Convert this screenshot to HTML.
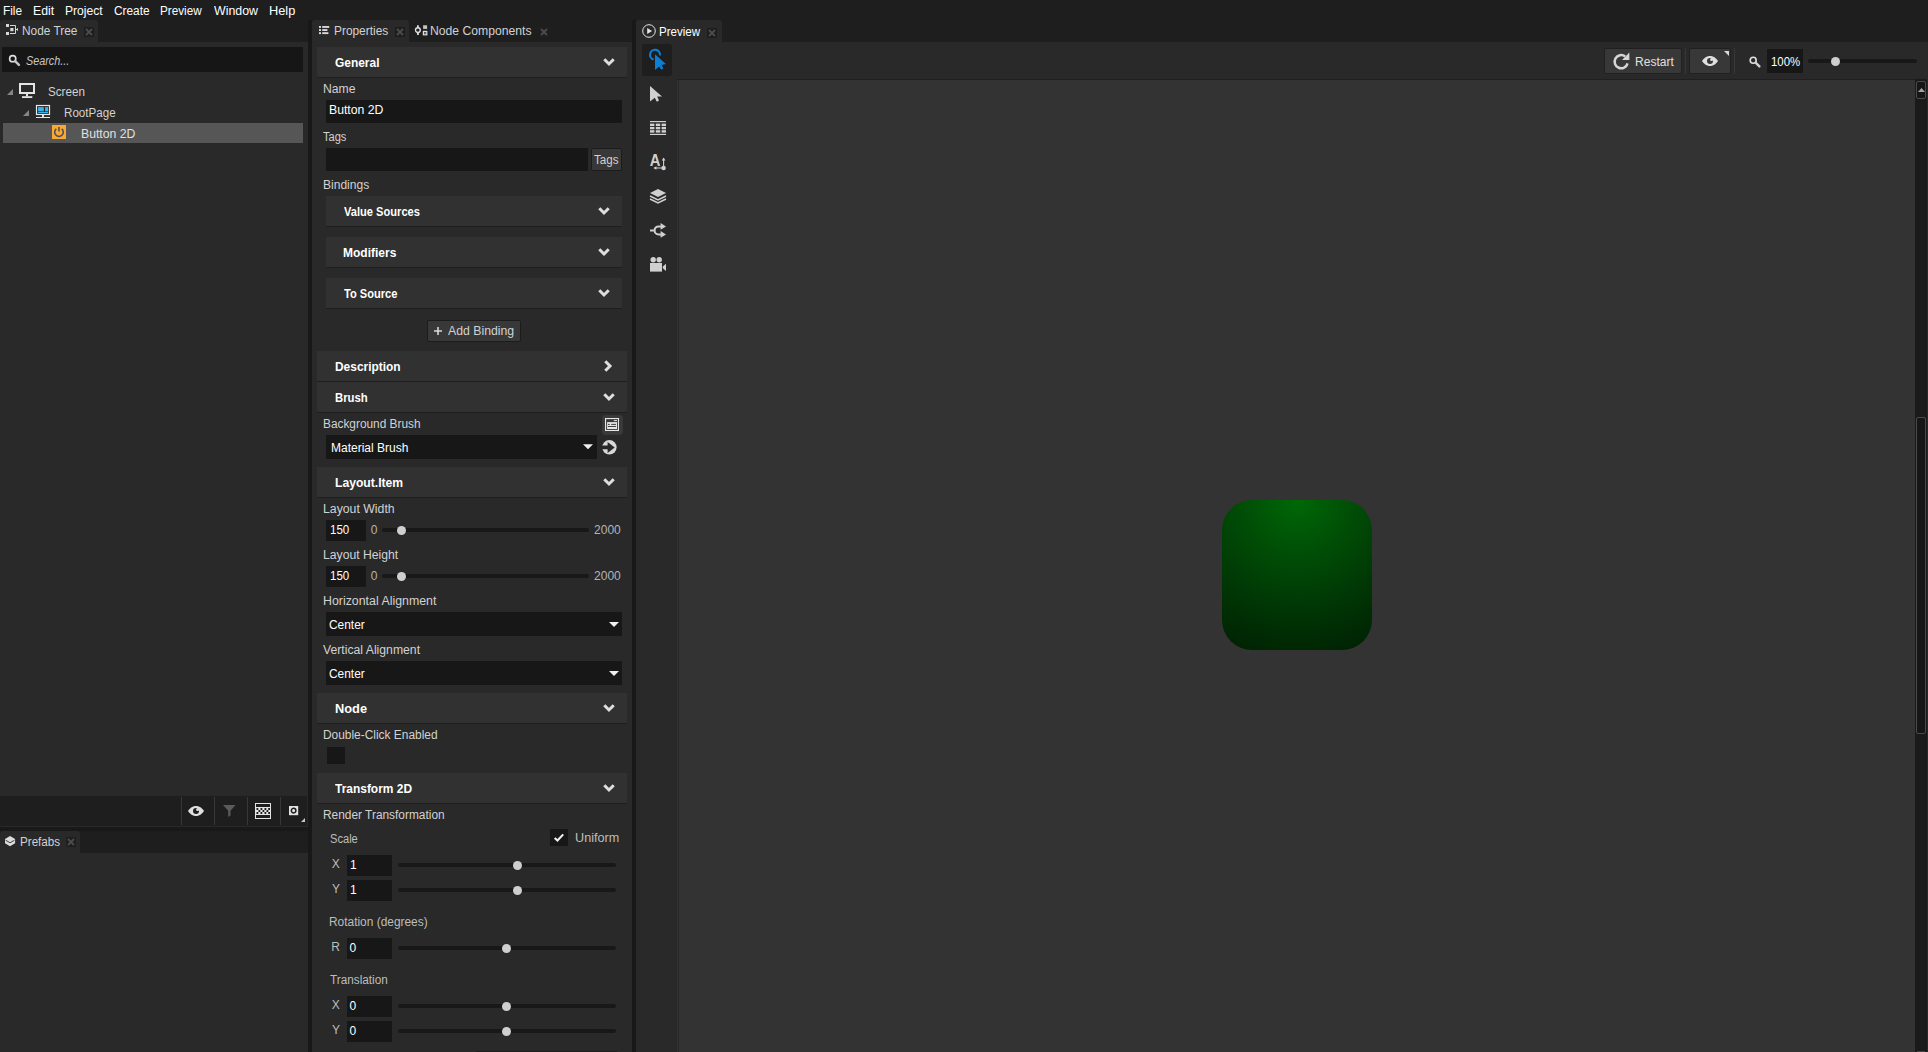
<!DOCTYPE html>
<html><head><meta charset="utf-8"><title>Kanzi Studio</title>
<style>
*{box-sizing:border-box;margin:0;padding:0}
html,body{width:1928px;height:1052px;overflow:hidden;background:#1e1e1e}
body{position:relative;font-family:"Liberation Sans",sans-serif;font-size:12px;color:#d2d2d2;-webkit-font-smoothing:antialiased}
.a{position:absolute}
.t{position:absolute;white-space:nowrap;line-height:14px;height:14px}
.w{color:#fff}
.b{font-weight:bold;color:#fff}
.panel{position:absolute;background:#292929}
.tab{position:absolute;background:#292929;border-radius:3px 3px 0 0}
.hd{position:absolute;background:#313131;border-bottom:1px solid #1e1e1e;height:31px}
.fld{position:absolute;background:#171717}
.trk{position:absolute;height:4px;border-radius:2px;background:#181818}
.th{position:absolute;width:9px;height:9px;border-radius:50%;background:#cfcfcf}
.btn{position:absolute;background:#383838;border:1px solid #1c1c1c;border-radius:2px}
svg{position:absolute;overflow:visible}
.x{position:absolute;width:10px;height:10px;background:#1e1e1e}
</style></head><body>
<!-- MENU -->
<div id="menu">
<span class="t w" style="left:2.85px;top:4px;transform:scaleX(0.9849);transform-origin:0 0">File</span>
<span class="t w" style="left:32.58px;top:4px;transform:scaleX(1.0243);transform-origin:0 0">Edit</span>
<span class="t w" style="left:64.80px;top:4px;transform:scaleX(1.0097);transform-origin:0 0">Project</span>
<span class="t w" style="left:113.55px;top:4px;transform:scaleX(0.9878);transform-origin:0 0">Create</span>
<span class="t w" style="left:160.45px;top:4px;transform:scaleX(0.9744);transform-origin:0 0">Preview</span>
<span class="t w" style="left:213.60px;top:4px;transform:scaleX(1.0301);transform-origin:0 0">Window</span>
<span class="t w" style="left:269.33px;top:4px;transform:scaleX(1.0658);transform-origin:0 0">Help</span>
</div>
<div id="left">
<div class="tab" style="left:0;top:20px;width:98px;height:23px"></div>
<div class="panel" style="left:0;top:42px;width:308px;height:785px"></div>
<svg style="left:6px;top:24px" width="12" height="12" viewBox="0 0 12 12"><g fill="#d8d8d8"><rect x="0" y="0" width="3" height="3"/><rect x="0" y="8" width="3" height="3"/><rect x="4.3" y="4" width="3.2" height="3.2"/></g><path d="M4 1.5H9.5V9.5H4M9.5 5.5H11.5M11.5 4.3V6.7" fill="none" stroke="#d8d8d8" stroke-width="1"/></svg>
<span class="t" style="left:22.39px;top:24px;transform:scaleX(0.9890);transform-origin:0 0">Node Tree</span>
<div class="x" style="left:84px;top:27px"></div>
<svg style="left:85px;top:28px" width="8" height="8" viewBox="0 0 8 8"><path d="M1 1L7 7M7 1L1 7" stroke="#4c4c4c" stroke-width="1.8" fill="none"/></svg>
<div class="fld" style="left:2px;top:47px;width:301px;height:25px;background:#161616"></div>
<svg style="left:8px;top:54px" width="12" height="12" viewBox="0 0 12 12"><circle cx="4.7" cy="4.7" r="3.1" fill="none" stroke="#e0e0e0" stroke-width="1.6"/><path d="M7.4 7.4L10.9 10.9" stroke="#c4c4c4" stroke-width="2.5" stroke-linecap="round"/></svg>
<span class="t" style="left:26.22px;top:54px;font-style:italic;color:#c8c8c8;transform:scaleX(0.9000);transform-origin:0 0">Search...</span>
<!-- tree -->
<svg style="left:7px;top:89px" width="6" height="6" viewBox="0 0 6 6"><path d="M6 0V6H0Z" fill="#858585"/></svg>
<svg style="left:19px;top:83px" width="16" height="15" viewBox="0 0 16 15"><rect x="1" y="1" width="14" height="9" fill="none" stroke="#e4e4e4" stroke-width="2"/><rect x="7" y="11" width="2" height="2.4" fill="#e4e4e4"/><rect x="3" y="13.2" width="10.3" height="1.8" fill="#e4e4e4"/></svg>
<span class="t" style="left:48.00px;top:85px;transform:scaleX(0.9721);transform-origin:0 0">Screen</span>
<svg style="left:23px;top:110px" width="6" height="6" viewBox="0 0 6 6"><path d="M6 0V6H0Z" fill="#858585"/></svg>
<svg style="left:36px;top:105px" width="14" height="13" viewBox="0 0 14 13"><rect x="0.5" y="0.5" width="13" height="9" fill="none" stroke="#e8e8e8" stroke-width="1.2"/><rect x="2.1" y="2.1" width="5.7" height="4.2" fill="#3bb4e8"/><rect x="9.1" y="2.1" width="2.9" height="4.2" fill="#3bb4e8"/><rect x="2.1" y="6.9" width="9.9" height="1.2" fill="#3bb4e8"/><rect x="6" y="9.5" width="1.9" height="2.5" fill="#e8e8e8"/><rect x="0" y="12" width="14" height="1" fill="#e8e8e8"/></svg>
<span class="t" style="left:63.83px;top:106px;transform:scaleX(0.9669);transform-origin:0 0">RootPage</span>
<div class="a" style="left:3px;top:123px;width:300px;height:20px;background:#565656"></div>
<svg style="left:52px;top:125px" width="14" height="14" viewBox="0 0 14 14"><rect width="14" height="14" fill="#f9a933"/><path d="M4.3 3.8A4.3 4.3 0 1 0 9.7 3.8" fill="none" stroke="#4d5058" stroke-width="1.6"/><path d="M7 1.9V6.6" stroke="#4d5058" stroke-width="1.6"/></svg>
<span class="t" style="left:80.79px;top:127px;color:#e0e0e0;transform:scaleX(1.0199);transform-origin:0 0">Button 2D</span>
<!-- bottom toolbar -->
<div class="a" style="left:0;top:796px;width:307px;height:30px;background:#1e1e1e"></div>
<div class="a" style="left:0;top:827px;width:308px;height:4px;background:#191919"></div>
<div class="a" style="left:181px;top:797px;width:1px;height:28px;background:#383838"></div>
<div class="a" style="left:214px;top:797px;width:1px;height:28px;background:#383838"></div>
<div class="a" style="left:247px;top:797px;width:1px;height:28px;background:#383838"></div>
<div class="a" style="left:280px;top:797px;width:1px;height:28px;background:#383838"></div>
<svg style="left:188px;top:805px" width="16" height="12" viewBox="0 0 16 12"><path d="M0 6C3 1.8 5.5 1 8 1S13 1.8 16 6C13 10.2 10.5 11 8 11S3 10.2 0 6Z" fill="#e0e0e0"/><circle cx="8" cy="5.9" r="3" fill="#1e1e1e"/><circle cx="9.6" cy="4.5" r="1.5" fill="#e0e0e0"/></svg>
<svg style="left:222.8px;top:805px" width="13" height="12" viewBox="0 0 13 12"><path d="M0 0H12.6L7.5 5.8V10.6L5.2 12V5.8Z" fill="#5a5a5a"/></svg>
<svg style="left:255px;top:803px" width="16" height="16" viewBox="0 0 16 16"><rect x="0.5" y="0.5" width="15" height="15" fill="none" stroke="#e4e4e4"/><rect x="1" y="4" width="14" height="8" fill="#e4e4e4"/><g fill="#1e1e1e"><rect x="1.5" y="5" width="1.8" height="2"/><rect x="5.5" y="5" width="1.8" height="2"/><rect x="9.5" y="5" width="1.8" height="2"/><rect x="13.2" y="5" width="1.8" height="2"/><rect x="3.5" y="7" width="1.8" height="2"/><rect x="7.5" y="7" width="1.8" height="2"/><rect x="11.5" y="7" width="1.8" height="2"/><rect x="1.5" y="9" width="1.8" height="2"/><rect x="5.5" y="9" width="1.8" height="2"/><rect x="9.5" y="9" width="1.8" height="2"/><rect x="13.2" y="9" width="1.8" height="2"/></g></svg>
<svg style="left:289px;top:806px" width="9" height="9" viewBox="0 0 9 9"><rect width="9.2" height="9.2" fill="#e2e2e2"/><circle cx="4.6" cy="4.6" r="2.3" fill="none" stroke="#1e1e1e" stroke-width="1.5"/></svg>
<svg style="left:301px;top:818px" width="4" height="4" viewBox="0 0 4 4"><path d="M4 0V4H0Z" fill="#c8c8c8"/></svg>
<!-- prefabs -->
<div class="tab" style="left:0;top:831px;width:80px;height:23px"></div>
<div class="panel" style="left:0;top:853px;width:308px;height:199px"></div>
<svg style="left:4.7px;top:835.8px" width="10.1" height="10.4" viewBox="0 0 10.4 10.6"><path d="M5.2 0L10.4 3V7.4L5.2 10.6L0 7.4V3Z" fill="#dcdcdc"/><path d="M0.6 4.3L5.2 6.9L9.8 4.3" fill="none" stroke="#292929" stroke-width="0.9"/></svg>
<span class="t" style="left:19.82px;top:835px;transform:scaleX(0.9704);transform-origin:0 0">Prefabs</span>
<div class="x" style="left:66px;top:837px"></div>
<svg style="left:67px;top:838px" width="8" height="8" viewBox="0 0 8 8"><path d="M1 1L7 7M7 1L1 7" stroke="#4c4c4c" stroke-width="1.8" fill="none"/></svg>
</div>
<!-- NODETREE_END -->
<div id="props">
<div class="a" style="left:308px;top:20px;width:4px;height:1032px;background:#181818"></div>
<div class="tab" style="left:312px;top:20px;width:97px;height:23px"></div>
<div class="panel" style="left:312px;top:42px;width:320px;height:1010px"></div>
<div class="a" style="left:632px;top:20px;width:4px;height:1032px;background:#181818"></div>
<svg style="left:319px;top:26px" width="10" height="9" viewBox="0 0 10 9"><g fill="#d8d8d8"><rect x="0" y="0" width="2" height="1.9"/><rect x="3.2" y="0" width="7" height="1.9"/><rect x="0" y="3.1" width="2" height="1.9"/><rect x="3.2" y="3.1" width="5.2" height="1.9"/><rect x="0" y="6.2" width="2" height="1.9"/><rect x="3.2" y="6.2" width="6.2" height="1.9"/></g></svg>
<span class="t" style="left:334.40px;top:24px;transform:scaleX(0.9908);transform-origin:0 0">Properties</span>
<div class="x" style="left:395px;top:27px"></div>
<svg style="left:396px;top:28px" width="8" height="8" viewBox="0 0 8 8"><path d="M1 1L7 7M7 1L1 7" stroke="#4c4c4c" stroke-width="1.8" fill="none"/></svg>
<svg style="left:414px;top:25px" width="14" height="11" viewBox="0 0 14 11"><circle cx="3.9" cy="5.1" r="2.4" fill="none" stroke="#e0e0e0" stroke-width="1.4"/><path d="M3.9 0.2V2.8M3.9 7.4V10" stroke="#e0e0e0" stroke-width="1.8"/><rect x="9.1" y="0.3" width="4" height="3.6" fill="#c4c4c4"/><rect x="9.4" y="6.4" width="3.4" height="3.4" fill="none" stroke="#e0e0e0" stroke-width="1.2"/><rect x="10.5" y="7.5" width="1.2" height="1.2" fill="#e0e0e0"/></svg>
<span class="t" style="left:430.17px;top:24px;transform:scaleX(1.0154);transform-origin:0 0">Node Components</span>
<div class="x" style="left:539px;top:27px;background:none"></div>
<svg style="left:540px;top:28px" width="8" height="8" viewBox="0 0 8 8"><path d="M1 1L7 7M7 1L1 7" stroke="#4c4c4c" stroke-width="1.8" fill="none"/></svg>

<!-- General -->
<div class="hd" style="left:317px;top:47px;width:310px"></div>
<span class="t b" style="left:335.14px;top:56px;transform:scaleX(0.9948);transform-origin:0 0">General</span>
<svg class="chv" style="left:603px;top:58px" width="12" height="8" viewBox="0 0 12 8"><path d="M1.3 1.3L6 6L10.7 1.3" fill="none" stroke="#dedede" stroke-width="3"/></svg>
<span class="t" style="left:323.00px;top:82px;transform:scaleX(1.0149);transform-origin:0 0">Name</span>
<div class="fld" style="left:326px;top:100px;width:296px;height:23px"></div>
<span class="t w" style="left:329.39px;top:103px;transform:scaleX(1.0199);transform-origin:0 0">Button 2D</span>
<span class="t" style="left:323.12px;top:130px;transform:scaleX(0.9232);transform-origin:0 0">Tags</span>
<div class="fld" style="left:326px;top:148px;width:262px;height:23px"></div>
<div class="btn" style="left:591px;top:148px;width:31px;height:23px"></div>
<span class="t" style="left:593.91px;top:153px;transform:scaleX(0.9657);transform-origin:0 0">Tags</span>
<span class="t" style="left:323.00px;top:178px;transform:scaleX(1.0036);transform-origin:0 0">Bindings</span>
<div class="hd" style="left:326px;top:196px;width:296px"></div>
<span class="t b" style="left:343.76px;top:205px;transform:scaleX(0.9251);transform-origin:0 0">Value Sources</span>
<svg class="chv" style="left:598px;top:207px" width="12" height="8" viewBox="0 0 12 8"><path d="M1.3 1.3L6 6L10.7 1.3" fill="none" stroke="#dedede" stroke-width="3"/></svg>
<div class="hd" style="left:326px;top:237px;width:296px"></div>
<span class="t b" style="left:342.88px;top:246px;transform:scaleX(0.9993);transform-origin:0 0">Modifiers</span>
<svg class="chv" style="left:598px;top:248px" width="12" height="8" viewBox="0 0 12 8"><path d="M1.3 1.3L6 6L10.7 1.3" fill="none" stroke="#dedede" stroke-width="3"/></svg>
<div class="hd" style="left:326px;top:278px;width:296px"></div>
<span class="t b" style="left:344.15px;top:287px;transform:scaleX(0.9253);transform-origin:0 0">To Source</span>
<svg class="chv" style="left:598px;top:289px" width="12" height="8" viewBox="0 0 12 8"><path d="M1.3 1.3L6 6L10.7 1.3" fill="none" stroke="#dedede" stroke-width="3"/></svg>
<div class="btn" style="left:427px;top:320px;width:94px;height:22px"></div>
<svg style="left:434px;top:327px" width="8" height="8" viewBox="0 0 8 8"><path d="M4 0V8M0 4H8" stroke="#d8d8d8" stroke-width="1.6"/></svg>
<span class="t" style="left:448.26px;top:324px;transform:scaleX(1.0229);transform-origin:0 0">Add Binding</span>

<!-- Description / Brush -->
<div class="hd" style="left:317px;top:351px;width:310px"></div>
<span class="t b" style="left:335.28px;top:360px;transform:scaleX(0.9942);transform-origin:0 0">Description</span>
<svg style="left:604px;top:360px" width="8" height="12" viewBox="0 0 8 12"><path d="M1.3 1.3L6 6L1.3 10.7" fill="none" stroke="#dedede" stroke-width="3"/></svg>
<div class="hd" style="left:317px;top:382px;width:310px"></div>
<span class="t b" style="left:335.35px;top:391px;transform:scaleX(0.9453);transform-origin:0 0">Brush</span>
<svg class="chv" style="left:603px;top:393px" width="12" height="8" viewBox="0 0 12 8"><path d="M1.3 1.3L6 6L10.7 1.3" fill="none" stroke="#dedede" stroke-width="3"/></svg>
<span class="t" style="left:323.00px;top:417px;transform:scaleX(0.9886);transform-origin:0 0">Background Brush</span>
<div class="btn" style="left:602px;top:415px;width:21px;height:20px;background:#3a3a3a;border-color:#373737;border-radius:3px"></div>
<svg style="left:605px;top:418px" width="14" height="13" viewBox="0 0 14 13"><rect x="0.55" y="0.55" width="12.9" height="11.9" fill="none" stroke="#e6e6e6" stroke-width="1.1"/><rect x="8.8" y="2.1" width="3.2" height="1" fill="#e6e6e6"/><rect x="2.1" y="4.1" width="9.9" height="6.9" fill="#e6e6e6"/><path d="M3 6.4H4.8M6.2 6.4H11M3 8.5H11" stroke="#2e2e2e" stroke-width="0.9"/></svg>
<div class="fld" style="left:326px;top:435px;width:271px;height:24px"></div>
<span class="t w" style="left:331.01px;top:441px;transform:scaleX(1.0007);transform-origin:0 0">Material Brush</span>
<svg style="left:583px;top:444.3px" width="10" height="5.4" viewBox="0 0 10 5"><path d="M0 0H10L5 5Z" fill="#f0f0f0"/></svg>
<svg style="left:601.5px;top:439.5px" width="15" height="15" viewBox="0 0 15 15"><circle cx="7.4" cy="7.3" r="7.2" fill="#d8d8d8"/><path d="M-0.5 5.5H5.6V2L12.7 7.4L5.6 12.9V9.3H-0.5Z" fill="#292929"/></svg>

<!-- Layout.Item -->
<div class="hd" style="left:317px;top:467px;width:310px"></div>
<span class="t b" style="left:335.27px;top:476px;transform:scaleX(1.0122);transform-origin:0 0">Layout.Item</span>
<svg class="chv" style="left:603px;top:478px" width="12" height="8" viewBox="0 0 12 8"><path d="M1.3 1.3L6 6L10.7 1.3" fill="none" stroke="#dedede" stroke-width="3"/></svg>
<span class="t" style="left:322.95px;top:502px;transform:scaleX(1.0225);transform-origin:0 0">Layout Width</span>
<div class="fld" style="left:326px;top:520px;width:40px;height:21px"></div>
<span class="t w" style="left:330.19px;top:523px;transform:scaleX(0.9611);transform-origin:0 0">150</span>
<span class="t" style="left:370.71px;top:523px;color:#b4b4b4;transform:scaleX(1.0000);transform-origin:0 0">0</span>
<div class="trk" style="left:382px;top:528px;width:207px"></div>
<div class="th" style="left:397px;top:526px"></div>
<span class="t" style="left:594.29px;top:523px;color:#b4b4b4;transform:scaleX(1.0029);transform-origin:0 0">2000</span>
<span class="t" style="left:322.97px;top:548px;transform:scaleX(1.0151);transform-origin:0 0">Layout Height</span>
<div class="fld" style="left:326px;top:566px;width:40px;height:21px"></div>
<span class="t w" style="left:330.19px;top:569px;transform:scaleX(0.9611);transform-origin:0 0">150</span>
<span class="t" style="left:370.71px;top:569px;color:#b4b4b4;transform:scaleX(1.0000);transform-origin:0 0">0</span>
<div class="trk" style="left:382px;top:574px;width:207px"></div>
<div class="th" style="left:397px;top:572px"></div>
<span class="t" style="left:594.29px;top:569px;color:#b4b4b4;transform:scaleX(1.0029);transform-origin:0 0">2000</span>
<span class="t" style="left:323.00px;top:594px;transform:scaleX(1.0305);transform-origin:0 0">Horizontal Alignment</span>
<div class="fld" style="left:326px;top:612px;width:296px;height:24px"></div>
<span class="t w" style="left:329.15px;top:618px;transform:scaleX(0.9920);transform-origin:0 0">Center</span>
<svg style="left:609px;top:622px" width="10" height="5" viewBox="0 0 10 5"><path d="M0 0H10L5 5Z" fill="#f0f0f0"/></svg>
<span class="t" style="left:323.07px;top:643px;transform:scaleX(1.0175);transform-origin:0 0">Vertical Alignment</span>
<div class="fld" style="left:326px;top:661px;width:296px;height:24px"></div>
<span class="t w" style="left:329.15px;top:667px;transform:scaleX(0.9920);transform-origin:0 0">Center</span>
<svg style="left:609px;top:671px" width="10" height="5" viewBox="0 0 10 5"><path d="M0 0H10L5 5Z" fill="#f0f0f0"/></svg>

<!-- Node -->
<div class="hd" style="left:317px;top:693px;width:310px"></div>
<span class="t b" style="left:335.21px;top:702px;transform:scaleX(1.0673);transform-origin:0 0">Node</span>
<svg class="chv" style="left:603px;top:704px" width="12" height="8" viewBox="0 0 12 8"><path d="M1.3 1.3L6 6L10.7 1.3" fill="none" stroke="#dedede" stroke-width="3"/></svg>
<span class="t" style="left:323.00px;top:728px;transform:scaleX(0.9927);transform-origin:0 0">Double-Click Enabled</span>
<div class="fld" style="left:327px;top:747px;width:18px;height:17px"></div>

<!-- Transform 2D -->
<div class="hd" style="left:317px;top:773px;width:310px"></div>
<span class="t b" style="left:334.56px;top:782px;transform:scaleX(0.9959);transform-origin:0 0">Transform 2D</span>
<svg class="chv" style="left:603px;top:784px" width="12" height="8" viewBox="0 0 12 8"><path d="M1.3 1.3L6 6L10.7 1.3" fill="none" stroke="#dedede" stroke-width="3"/></svg>
<span class="t" style="left:322.99px;top:808px;transform:scaleX(0.9912);transform-origin:0 0">Render Transformation</span>
<span class="t" style="left:330.25px;top:832px;color:#bdbdbd;transform:scaleX(0.9260);transform-origin:0 0">Scale</span>
<div class="fld" style="left:550px;top:829px;width:18px;height:17px"></div>
<svg style="left:553px;top:833px" width="12" height="10" viewBox="0 0 12 10"><path d="M1.7 4.9L4.5 7.5L10.2 1.4" fill="none" stroke="#f0f0f0" stroke-width="2.1"/></svg>
<span class="t" style="left:574.99px;top:831px;color:#bdbdbd;transform:scaleX(1.0530);transform-origin:0 0">Uniform</span>
<span class="t" style="left:331.67px;top:857px;color:#bdbdbd;transform:scaleX(1.0000);transform-origin:0 0">X</span>
<div class="fld" style="left:347px;top:855px;width:45px;height:21px"></div>
<span class="t w" style="left:349.91px;top:858px;transform:scaleX(1.0000);transform-origin:0 0">1</span>
<div class="trk" style="left:398px;top:863px;width:218px"></div>
<div class="th" style="left:513px;top:861px"></div>
<span class="t" style="left:332.00px;top:882px;color:#bdbdbd;transform:scaleX(1.0000);transform-origin:0 0">Y</span>
<div class="fld" style="left:347px;top:880px;width:45px;height:21px"></div>
<span class="t w" style="left:349.91px;top:883px;transform:scaleX(1.0000);transform-origin:0 0">1</span>
<div class="trk" style="left:398px;top:888px;width:218px"></div>
<div class="th" style="left:513px;top:886px"></div>
<span class="t" style="left:328.98px;top:915px;color:#bdbdbd;transform:scaleX(0.9927);transform-origin:0 0">Rotation (degrees)</span>
<span class="t" style="left:331.35px;top:940px;color:#bdbdbd;transform:scaleX(1.0000);transform-origin:0 0">R</span>
<div class="fld" style="left:347px;top:938px;width:45px;height:21px"></div>
<span class="t w" style="left:349.58px;top:941px;transform:scaleX(1.0000);transform-origin:0 0">0</span>
<div class="trk" style="left:398px;top:946px;width:218px"></div>
<div class="th" style="left:502px;top:944px"></div>
<span class="t" style="left:330.08px;top:973px;color:#bdbdbd;transform:scaleX(0.9803);transform-origin:0 0">Translation</span>
<span class="t" style="left:331.67px;top:998px;color:#bdbdbd;transform:scaleX(1.0000);transform-origin:0 0">X</span>
<div class="fld" style="left:347px;top:996px;width:45px;height:21px"></div>
<span class="t w" style="left:349.58px;top:999px;transform:scaleX(1.0000);transform-origin:0 0">0</span>
<div class="trk" style="left:398px;top:1004px;width:218px"></div>
<div class="th" style="left:502px;top:1002px"></div>
<span class="t" style="left:332.00px;top:1023px;color:#bdbdbd;transform:scaleX(1.0000);transform-origin:0 0">Y</span>
<div class="fld" style="left:347px;top:1021px;width:45px;height:21px"></div>
<span class="t w" style="left:349.58px;top:1024px;transform:scaleX(1.0000);transform-origin:0 0">0</span>
<div class="trk" style="left:398px;top:1029px;width:218px"></div>
<div class="th" style="left:502px;top:1027px"></div>
<div class="a" style="left:476px;top:1051px;width:141px;height:1px;background:#1e1e1e"></div>
</div>
<!-- PROPS_END -->
<div id="prev">
<div class="tab" style="left:636px;top:20px;width:86px;height:23px"></div>
<div class="panel" style="left:636px;top:42px;width:1292px;height:1010px"></div>
<svg style="left:642px;top:24px" width="14" height="14" viewBox="0 0 14 14"><circle cx="7" cy="7" r="6.3" fill="none" stroke="#e6e6e6" stroke-width="1"/><path d="M5.2 3.9L10 7L5.2 10.1Z" fill="#e6e6e6"/></svg>
<span class="t w" style="left:659.46px;top:25px;transform:scaleX(0.9634);transform-origin:0 0">Preview</span>
<div class="x" style="left:707px;top:28px"></div>
<svg style="left:708px;top:29px" width="8" height="8" viewBox="0 0 8 8"><path d="M1 1L7 7M7 1L1 7" stroke="#4c4c4c" stroke-width="1.8" fill="none"/></svg>
<!-- left tools -->
<div class="a" style="left:642px;top:44px;width:30px;height:32px;background:#1e1e1e;border-radius:3px"></div>
<svg style="left:649px;top:49px" width="17" height="22" viewBox="0 0 17 22"><path d="M4.6 10.6A5 5 0 1 1 11 6.4" fill="none" stroke="#0a7fd4" stroke-width="2.1"/><path d="M6 5.3L16.9 15L12.6 16L14.4 19.6L12.2 20.8L10.2 17.4L6 20.9Z" fill="#0a7fd4"/></svg>
<svg style="left:650px;top:86px" width="13" height="17" viewBox="0 0 13 17"><path d="M0 0L12 10.6H7.2L9 14.6L6.8 15.8L4.8 11.8L0 15.6Z" fill="#d0d0d0"/></svg>
<svg style="left:650px;top:121px" width="16" height="14" viewBox="0 0 16 14"><g fill="#d0d0d0"><rect x="0" y="0" width="16" height="1.2"/><rect x="0" y="12.8" width="16" height="1.2"/><rect x="0" y="2.6" width="4.4" height="2.4"/><rect x="5.8" y="2.6" width="4.4" height="2.4"/><rect x="11.6" y="2.6" width="4.4" height="2.4"/><rect x="0" y="5.9" width="4.4" height="2.4"/><rect x="5.8" y="5.9" width="4.4" height="2.4"/><rect x="11.6" y="5.9" width="4.4" height="2.4"/><rect x="0" y="9.2" width="4.4" height="2.4"/><rect x="5.8" y="9.2" width="4.4" height="2.4"/><rect x="11.6" y="9.2" width="4.4" height="2.4"/></g></svg>
<svg style="left:650px;top:154px" width="16" height="17" viewBox="0 0 16 17"><text x="-0.3" y="12.2" transform="scale(0.87 1)" style="font-family:'Liberation Sans',sans-serif;font-weight:700;font-size:17px" fill="#d0d0d0">A</text><circle cx="13.6" cy="14" r="2.2" fill="#d0d0d0"/><path d="M13.6 14V4.6M4.5 14H13.6" stroke="#d0d0d0" stroke-width="1.1"/><path d="M11.8 6.4L13.6 3.4L15.4 6.4ZM6.4 12.2L3.4 14L6.4 15.8Z" fill="#d0d0d0"/></svg>
<svg style="left:650px;top:189px" width="16" height="15" viewBox="0 0 16 15"><path d="M8 0L16 4L8 8L0 4Z" fill="#d0d0d0"/><path d="M0 7L8 11L16 7" fill="none" stroke="#d0d0d0" stroke-width="1.5"/><path d="M0 10L8 14L16 10" fill="none" stroke="#d0d0d0" stroke-width="1.5"/></svg>
<svg style="left:650px;top:223px" width="16" height="15" viewBox="0 0 16 15"><path d="M0 7.4H4.2M11 3.4H8.6A4 4 0 0 0 8.6 11.4H11" fill="none" stroke="#d0d0d0" stroke-width="2"/><path d="M10.6 0L16 3.4L10.6 6.8ZM10.6 8L16 11.4L10.6 14.8Z" fill="#d0d0d0"/></svg>
<svg style="left:650px;top:257px" width="16" height="15" viewBox="0 0 16 15"><circle cx="3.2" cy="2.8" r="2.7" fill="#d0d0d0"/><circle cx="9.2" cy="2.8" r="2.7" fill="#d0d0d0"/><rect x="0" y="6" width="12" height="8.6" fill="#d0d0d0"/><path d="M12.8 9.6L16 6.8V14L12.8 11.2Z" fill="#d0d0d0"/></svg>
<!-- top right toolbar -->
<div class="btn" style="left:1604px;top:48px;width:78px;height:26px;border-color:#202020"></div>
<svg style="left:1613px;top:53px" width="17" height="17" viewBox="0 0 17 17"><path d="M14.6 10.4A6.6 6.6 0 1 1 12.2 3.4" fill="none" stroke="#d6d6d6" stroke-width="2.5"/><path d="M9 7H16.4V-0.4Z" fill="#d6d6d6"/></svg>
<span class="t" style="left:1634.80px;top:55px;color:#e0e0e0;transform:scaleX(1.0028);transform-origin:0 0">Restart</span>
<div class="a" style="left:1685px;top:48px;width:1px;height:26px;background:#383838"></div>
<div class="btn" style="left:1689px;top:48px;width:42px;height:26px;border-color:#202020"></div>
<svg style="left:1702px;top:55px" width="16" height="12" viewBox="0 0 16 12"><path d="M0 6C3 1.8 5.5 1 8 1S13 1.8 16 6C13 10.2 10.5 11 8 11S3 10.2 0 6Z" fill="#e0e0e0"/><circle cx="8" cy="5.9" r="3" fill="#383838"/><circle cx="9.6" cy="4.5" r="1.5" fill="#e0e0e0"/></svg>
<svg style="left:1724px;top:51px" width="5" height="5" viewBox="0 0 5 5"><path d="M0 0H5V5Z" fill="#d8d8d8"/></svg>
<div class="a" style="left:1734px;top:48px;width:1px;height:26px;background:#383838"></div>
<svg style="left:1749px;top:56px" width="12" height="12" viewBox="0 0 12 12"><circle cx="4.2" cy="4.2" r="3" fill="none" stroke="#e0e0e0" stroke-width="1.6"/><path d="M6.6 6.6L10.4 10.4" stroke="#d0d0d0" stroke-width="2.4" stroke-linecap="round"/></svg>
<div class="fld" style="left:1767px;top:49px;width:36px;height:24px"></div>
<span class="t w" style="left:1770.60px;top:55px;transform:scaleX(0.9496);transform-origin:0 0">100%</span>
<div class="trk" style="left:1808px;top:59px;width:109px"></div>
<div class="th" style="left:1830.5px;top:56.5px;width:9.5px;height:9.5px"></div>
<!-- viewport -->
<div class="a" style="left:677px;top:79px;width:1250px;height:1px;background:#1f1f1f"></div>
<div class="a" style="left:677px;top:80px;width:1px;height:972px;background:#313131"></div>
<div class="a" style="left:679px;top:80px;width:1236px;height:972px;background:#333333"></div>
<div class="a" style="left:1915px;top:79px;width:12px;height:973px;background:#1a1a1a"></div>
<div class="a" style="left:1916px;top:81px;width:10px;height:18px;border:1px solid #4a4a4a;border-radius:2px;background:#161616"></div>
<svg style="left:1917.5px;top:88px" width="7" height="4" viewBox="0 0 7 4"><path d="M0 4H7L3.5 0Z" fill="#a4a4a4"/></svg>
<div class="a" style="left:1916px;top:417px;width:10px;height:317px;border:1px solid #4a4a4a;border-radius:2px;background:#161616"></div>
<div class="a" style="left:1917px;top:1051px;width:8px;height:1px;background:#444"></div>
<div class="a" style="left:1222px;top:500px;width:150px;height:150px;border-radius:30px;background:radial-gradient(circle 170px at 50% 0%,#006806 0%,#004c06 35%,#003605 65%,#001f02 100%)"></div>
</div>
<!-- PREVIEW_END -->
</body></html>
